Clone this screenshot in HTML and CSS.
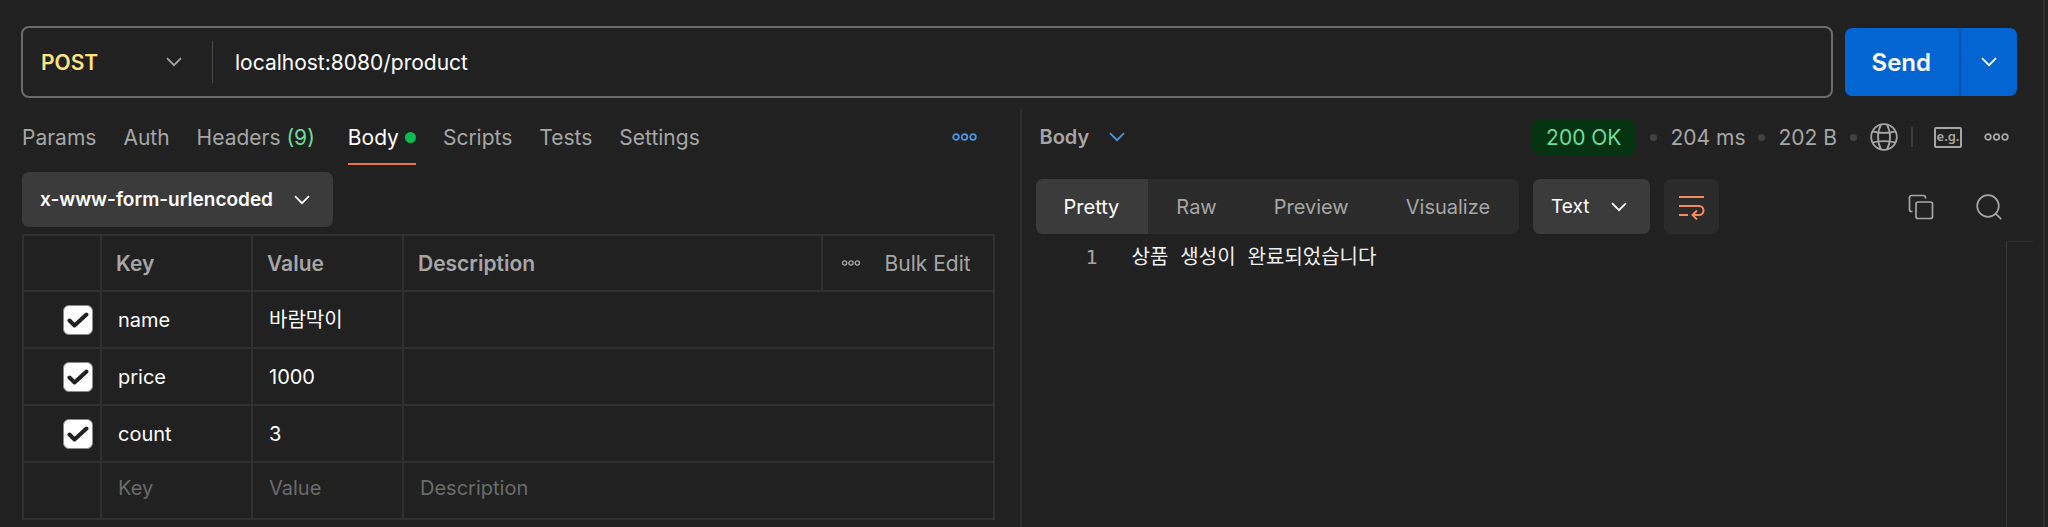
FILE: index.html
```html
<!DOCTYPE html>
<html lang="ko">
<head>
    <meta charset="UTF-8">
    <meta name="viewport" content="width=device-width, initial-scale=1.0">
    <title>POST localhost:8080/product</title>
    <link rel="stylesheet" href="styles.css">
</head>
<body>
    <!-- shared icons -->
    <svg class="sprite" aria-hidden="true">
        <symbol id="chevron" viewBox="0 0 16 10">
            <path d="M1 1.2 8 8.2 15 1.2" fill="none" stroke="currentColor" stroke-width="1.7"/>
        </symbol>
        <symbol id="more" viewBox="0 0 25 8">
            <g fill="none" stroke="currentColor" stroke-width="1.8">
                <circle cx="4" cy="4" r="2.8"/>
                <circle cx="12.5" cy="4" r="2.8"/>
                <circle cx="21" cy="4" r="2.8"/>
            </g>
        </symbol>
        <symbol id="check" viewBox="0 0 22 16">
            <path d="M2.5 8.5 7.5 13.5 19.5 2.5" fill="none" stroke="currentColor" stroke-width="4" stroke-linecap="round" stroke-linejoin="round"/>
        </symbol>
    </svg>

    <div class="app">
        <form class="request-bar" onsubmit="return false">
            <div class="url-box">
                <div class="picker method">
                    <select aria-label="Method">
                        <option>POST</option>
                        <option>GET</option>
                    </select>
                    <svg class="chevron"><use href="#chevron"/></svg>
                </div>
                <input class="url" type="text" aria-label="URL" value="localhost:8080/product">
            </div>
            <div class="send">
                <button class="send-main" type="submit">Send</button>
                <button class="send-more" type="button" aria-label="Send options">
                    <svg class="chevron"><use href="#chevron"/></svg>
                </button>
            </div>
        </form>

        <main class="panes">
            <section class="request">
                <nav class="row tabs">
                    <button>Params</button>
                    <button>Auth</button>
                    <button>Headers <span class="count">(9)</span></button>
                    <button class="active">Body<span class="dot"></span></button>
                    <button>Scripts</button>
                    <button>Tests</button>
                    <button>Settings</button>
                    <button class="more accent" aria-label="More"><svg class="dots"><use href="#more"/></svg></button>
                </nav>

                <div class="picker body-type">
                    <select aria-label="Body type">
                        <option>x-www-form-urlencoded</option>
                        <option>form-data</option>
                        <option>raw</option>
                    </select>
                    <svg class="chevron"><use href="#chevron"/></svg>
                </div>

                <table>
                    <colgroup>
                        <col class="col-check">
                        <col class="col-text">
                        <col class="col-text">
                        <col>
                        <col class="col-bulk">
                    </colgroup>
                    <thead>
                        <tr>
                            <th></th>
                            <th>Key</th>
                            <th>Value</th>
                            <th>Description</th>
                            <th>
                                <div class="bulk">
                                    <button aria-label="Columns"><svg class="dots-small"><use href="#more"/></svg></button>
                                    <button>Bulk Edit</button>
                                </div>
                            </th>
                        </tr>
                    </thead>
                    <tbody>
                        <tr>
                            <td><label class="tick"><input type="checkbox" aria-label="name" checked><svg><use href="#check"/></svg></label></td>
                            <td><input type="text" aria-label="Key" value="name"></td>
                            <td><input type="text" aria-label="Value" value="바람막이"></td>
                            <td colspan="2"><input type="text" aria-label="Description"></td>
                        </tr>
                        <tr>
                            <td><label class="tick"><input type="checkbox" aria-label="price" checked><svg><use href="#check"/></svg></label></td>
                            <td><input type="text" aria-label="Key" value="price"></td>
                            <td><input type="text" aria-label="Value" value="1000"></td>
                            <td colspan="2"><input type="text" aria-label="Description"></td>
                        </tr>
                        <tr>
                            <td><label class="tick"><input type="checkbox" aria-label="count" checked><svg><use href="#check"/></svg></label></td>
                            <td><input type="text" aria-label="Key" value="count"></td>
                            <td><input type="text" aria-label="Value" value="3"></td>
                            <td colspan="2"><input type="text" aria-label="Description"></td>
                        </tr>
                        <tr class="new">
                            <td></td>
                            <td><input type="text" aria-label="Key" placeholder="Key"></td>
                            <td><input type="text" aria-label="Value" placeholder="Value"></td>
                            <td colspan="2"><input type="text" aria-label="Description" placeholder="Description"></td>
                        </tr>
                    </tbody>
                </table>
            </section>

            <section class="response">
                <div class="row status">
                    <button class="part">Body <svg class="chevron"><use href="#chevron"/></svg></button>
                    <span class="badge">200 OK</span>
                    <span class="sep"></span>
                    <span>204 ms</span>
                    <span class="sep"></span>
                    <span>202 B</span>
                    <span class="sep"></span>
                    <button class="network" aria-label="Network">
                        <svg width="28" height="28" viewBox="0 0 28 28" fill="none" stroke="currentColor" stroke-width="1.8">
                            <circle cx="14" cy="14" r="12.8"/>
                            <path d="M11 1.6C7 9 7 19 11 26.4M17 1.6C21 9 21 19 17 26.4M2.6 8.4C9 10.4 19 10.4 25.4 8.4M2.6 19.6C9 17.6 19 17.6 25.4 19.6"/>
                        </svg>
                    </button>
                    <span class="bar"></span>
                    <button class="example" aria-label="Save as example"><span>e.g.</span></button>
                    <button aria-label="More"><svg class="dots"><use href="#more"/></svg></button>
                </div>

                <div class="toolbar">
                    <div class="segments">
                        <button class="active">Pretty</button>
                        <button>Raw</button>
                        <button>Preview</button>
                        <button>Visualize</button>
                    </div>
                    <div class="picker format">
                        <select aria-label="Format">
                            <option>Text</option>
                            <option>JSON</option>
                        </select>
                        <svg class="chevron"><use href="#chevron"/></svg>
                    </div>
                    <button class="wrap" aria-label="Wrap lines">
                        <svg width="26" height="26" viewBox="0 0 26 26" fill="none" stroke="currentColor" stroke-width="2">
                            <path d="M0 3H25M0 12H20A4.5 4.5 0 0 1 20 21H14M0 21H9M18 16.5 13.5 21 18 25.5"/>
                        </svg>
                    </button>
                    <button class="copy" aria-label="Copy">
                        <svg width="26" height="26" viewBox="0 0 26 26" fill="none" stroke="currentColor" stroke-width="1.7">
                            <rect x="8" y="8" width="16.5" height="16.5" rx="2"/>
                            <path d="M4.5 17.5H3.5A2 2 0 0 1 1.5 15.5V3.5A2 2 0 0 1 3.5 1.5H15.5A2 2 0 0 1 17.5 3.5V4.5"/>
                        </svg>
                    </button>
                    <button aria-label="Search">
                        <svg width="26" height="26" viewBox="0 0 26 26" fill="none" stroke="currentColor" stroke-width="1.7">
                            <circle cx="12" cy="12" r="10.8"/>
                            <path d="M19.6 19.6 25.2 25.2"/>
                        </svg>
                    </button>
                </div>

                <div class="viewer">
                    <span class="line-number">1</span>
                    <code>상품 생성이 완료되었습니다</code>
                    <div class="minimap"></div>
                </div>
            </section>
        </main>
    </div>
</body>
</html>
```
FILE: styles.css
```css
* {
    box-sizing: border-box;
}

body {
    margin: 0;
    background-color: #212121;
    color: #a6a6a6;
    font-family: Inter, "Noto Sans CJK KR", sans-serif;
    font-size: 21px;
}

button,
input,
select {
    margin: 0;
    padding: 0;
    border: 0;
    background: none;
    color: inherit;
    font: inherit;
}

button {
    display: flex;
    align-items: center;
    cursor: pointer;
}

.sprite {
    display: none;
}

.chevron {
    width: 16px;
    height: 10px;
}

.dots {
    width: 25px;
    height: 8px;
}

.dots-small {
    width: 20px;
    height: 6px;
}

.app {
    display: flex;
    flex-direction: column;
    min-height: 100vh;
    margin-right: 3px;
    border-right: 2px solid #2e2e2e;
}

/* select with its own arrow on top */
.picker {
    display: grid;
    align-items: center;
}

.picker select,
.picker .chevron {
    grid-area: 1 / 1;
}

.picker select {
    appearance: none;
    width: 100%;
    height: 100%;
}

.picker .chevron {
    justify-self: end;
    pointer-events: none;
}

/* request bar */
.request-bar {
    display: flex;
    align-items: center;
    gap: 12px;
    padding: 26px 26px 11px 21px;
}

.url-box {
    display: flex;
    flex: 1;
    align-items: center;
    height: 72px;
    border: 2px solid #6b6b6b;
    border-radius: 8px;
}

.method {
    width: 190px;
    height: 42px;
    padding: 0 30px 0 18px;
    border-right: 1px solid #4a4a4a;
}

.method select {
    color: #ffe47e;
    font-weight: 600;
}

.url {
    flex: 1;
    min-width: 0;
    padding: 0 22px;
    color: #fff;
}

.send {
    display: flex;
    height: 68px;
    border-radius: 7px;
    background-color: #0265d2;
    color: #fff;
}

.send-main {
    padding: 0 28px 0 27px;
    border-right: 2px solid #0552a8;
    font-size: 24px;
    font-weight: 600;
}

.send-more {
    padding: 0 20px;
}

/* panes */
.panes {
    display: grid;
    flex: 1;
    grid-template-columns: 1fr 1fr;
}

.request {
    padding: 0 25px 6px 22px;
    border-right: 2px solid #2e2e2e;
}

.response {
    display: flex;
    flex-direction: column;
}

.row {
    display: flex;
    align-items: center;
    height: 56px;
}

.tabs {
    gap: 27px;
}

.tabs button {
    height: 56px;
    border-bottom: 2px solid transparent;
    border-top: 2px solid transparent;
    white-space: pre;
}

.tabs .active {
    border-bottom-color: #e87344;
    color: #fff;
}

.count {
    margin-right: 6px;
    color: #6bdd9a;
}

.dot {
    width: 11px;
    height: 11px;
    margin-left: 6px;
    border-radius: 50%;
    background-color: #0cbb52;
}

.tabs .more {
    margin-left: auto;
    margin-right: 18px;
}

.accent {
    color: #4a95e6;
}

.body-type {
    width: 311px;
    height: 55px;
    margin: 7px 0;
    padding: 0 23px 0 18px;
    border-radius: 7px;
    background-color: #3b3b3b;
    color: #fff;
    font-size: 19px;
    font-weight: 600;
}

/* parameters */
table {
    width: 100%;
    border-collapse: collapse;
    table-layout: fixed;
}

th,
td {
    height: 57px;
    padding: 0 0 0 16px;
    border: 2px solid #303030;
    text-align: left;
}

th {
    height: 56px;
    padding-left: 14px;
    font-weight: 600;
}

.new td {
    padding-bottom: 6px;
}

td input[type="text"] {
    width: 100%;
    color: #fff;
    font-size: 20px;
}

td input::placeholder {
    color: #6b6b6b;
    opacity: 1;
}

.col-check {
    width: 78px;
}

.col-text {
    width: 151px;
}

.col-bulk {
    width: 172px;
}

.bulk {
    display: flex;
    align-items: center;
    gap: 24px;
    padding-left: 4px;
    font-weight: 400;
}

.tick {
    display: grid;
    place-items: center;
    width: 30px;
    margin: 0 7px 0 auto;
}

.tick input,
.tick svg {
    grid-area: 1 / 1;
}

.tick input {
    appearance: none;
    width: 30px;
    height: 30px;
    border: 1px solid #8a8a8a;
    border-radius: 6px;
    background-color: #fff;
}

.tick svg {
    width: 22px;
    height: 16px;
    color: #212121;
    pointer-events: none;
}

/* response header */
.status {
    gap: 13px;
    padding: 0 34px 0 18px;
}

.part {
    gap: 20px;
    margin-right: auto;
    font-size: 20px;
    font-weight: 600;
}

.part .chevron {
    color: #4a95e6;
}

.badge {
    margin-right: 2px;
    padding: 0 14px;
    border-radius: 6px;
    background-color: #043312;
    color: #6bdd9a;
    line-height: 35px;
}

.sep {
    width: 7px;
    height: 7px;
    border-radius: 50%;
    background-color: #424242;
}

.bar {
    width: 2px;
    height: 20px;
    background-color: #3d3d3d;
}

.example {
    margin: 0 9px 0 8px;
}

.example span {
    width: 28px;
    height: 21px;
    border: 2px solid currentColor;
    border-radius: 2px;
    font-family: "Noto Sans", sans-serif;
    font-size: 13px;
    font-weight: 600;
    line-height: 15px;
    text-align: center;
}

/* response toolbar */
.toolbar {
    display: flex;
    align-items: center;
    gap: 14px;
    margin: 14px 41px 7px 14px;
}

.segments {
    display: flex;
    overflow: hidden;
    border-radius: 7px;
    background-color: #2b2b2b;
    font-size: 20px;
}

.segments button {
    height: 55px;
    padding: 0 29px 0 28px;
}

.segments .active {
    background-color: #3b3b3b;
    color: #fff;
}

.format {
    width: 117px;
    height: 55px;
    padding: 0 23px 0 18px;
    border-radius: 7px;
    background-color: #3b3b3b;
    color: #fff;
    font-size: 19px;
}

.wrap {
    justify-content: center;
    width: 55px;
    height: 55px;
    border-radius: 7px;
    background-color: #2b2b2b;
    color: #f08a62;
}

.copy {
    margin-left: auto;
    margin-right: 28px;
}

/* response text */
.viewer {
    display: flex;
    flex: 1;
    font-family: "DejaVu Sans Mono", "Noto Sans CJK KR", monospace;
    font-size: 20px;
    line-height: 32px;
}

.line-number {
    width: 76px;
    text-align: right;
}

code {
    flex: 1;
    padding-left: 34px;
    color: #f0f0f0;
    font: inherit;
}

.minimap {
    width: 27px;
    margin-right: 10px;
    border-top: 1px solid #2e2e2e;
    border-left: 1px solid #3a3a3a;
}
```
